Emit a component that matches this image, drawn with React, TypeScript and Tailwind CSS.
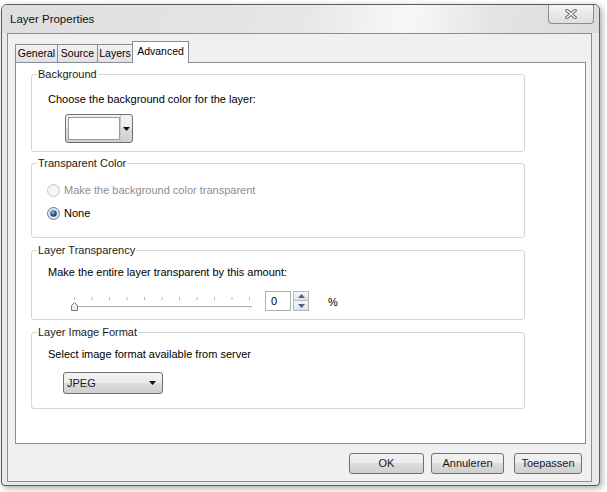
import type { ReactNode } from 'react';

const btn =
    'h-[21px] rounded-[3px] border border-[#707070] bg-[linear-gradient(#f2f2f2_0%,#ebebeb_50%,#dddddd_50%,#cfcfcf_100%)] flex items-center text-[#1a1a1a]';

const tab =
    'h-[18px] border-l border-t border-[#898c95] bg-[linear-gradient(#f3f3f3,#e1e1e1)] flex items-center justify-center text-[10.5px]';

const Group = ({ title, className, children }: { title: string; className: string; children: ReactNode }) => (
    <fieldset className={`ml-[15px] w-[494px] rounded-[3px] border border-[#d5d5d5] ${className}`}>
        <legend className="ml-[5px] px-[1px] leading-[16px] text-[#1a1a1a]">{title}</legend>
        <div className="pl-[16px]">{children}</div>
    </fieldset>
);

const DownArrow = () => (
    <svg width="7" height="4" viewBox="0 0 7 4">
        <path d="M0 0 H7 L3.5 4 Z" fill="#111" />
    </svg>
);

const Radio = ({ checked, disabled }: { checked?: boolean; disabled?: boolean }) => (
    <svg width="13" height="13" viewBox="0 0 13 13">
        <defs>
            <radialGradient id="rg" cx="0.5" cy="0.5" r="0.5">
                <stop offset="0" stopColor="#ffffff" />
                <stop offset="1" stopColor="#dcdcdc" />
            </radialGradient>
            <radialGradient id="dot" cx="0.4" cy="0.35" r="0.6">
                <stop offset="0" stopColor="#7cc3f0" />
                <stop offset="0.5" stopColor="#2b72b0" />
                <stop offset="1" stopColor="#173f6b" />
            </radialGradient>
        </defs>
        <circle cx="6.5" cy="6.5" r="6" fill={disabled ? '#f4f4f4' : 'url(#rg)'} stroke={disabled ? '#c4c4c4' : '#6f7f90'} />
        {checked && <circle cx="6.5" cy="6.5" r="3.3" fill="url(#dot)" />}
    </svg>
);

const Slider = () => {
    const ticks = Array.from({ length: 11 }, (_, i) => 8 + i * 17.5);
    return (
        <svg width="190" height="20" viewBox="0 0 190 20">
            {ticks.map((x) => (
                <line key={x} x1={x + 0.5} y1="6" x2={x + 0.5} y2="9" stroke="#b8b8b8" />
            ))}
            <line x1="6" y1="15.5" x2="186" y2="15.5" stroke="#b4b4b4" />
            <line x1="6" y1="16.5" x2="186" y2="16.5" stroke="#f4f4f4" />
            <path d="M5.5 14.5 L8.5 11.5 L11.5 14.5 V19.5 H5.5 Z" fill="#ececec" stroke="#7a7a7a" />
        </svg>
    );
};

export default function App() {
    return (
        <div className="w-[607px] h-[492px] bg-white pt-[4px] pl-[1px] font-['Liberation_Sans',Arial,sans-serif] text-[11px] text-black">
            <div className="w-[599px] h-[482px] rounded-t-[6px] rounded-b-[4px] border border-[#5c5c5c] bg-[#e9e9e9] shadow-[2px_2px_6px_rgba(0,0,0,0.35)] flex flex-col">
                {/* title bar */}
                <div className="h-[28px] flex items-start rounded-t-[5px] bg-[linear-gradient(100deg,#dedede_0%,#e6e6e6_50%,#f8f8f8_68%,#e4e4e4_82%,#dcdcdc_100%)]">
                    <div className="pl-[8px] pt-[7px] text-[11.5px] leading-[14px] text-[#111]">Layer Properties</div>
                    <div className="ml-auto mr-[5px] w-[46px] h-[19px] rounded-b-[4px] border border-t-0 border-[#8c8c8c] bg-[linear-gradient(#f4f4f4,#dedede)] flex items-center justify-center">
                        <svg width="12" height="10" viewBox="0 0 12 10">
                            <path d="M2 1.5 L10 8.5 M10 1.5 L2 8.5" stroke="#6b6b6b" strokeWidth="3.4" strokeLinecap="square" />
                            <path d="M2 1.5 L10 8.5 M10 1.5 L2 8.5" stroke="#fbfbfb" strokeWidth="1.4" strokeLinecap="square" />
                        </svg>
                    </div>
                </div>

                {/* client area */}
                <div className="ml-[5px] w-[585px] h-[449px] border border-[#8e8e8e] bg-[#f0f0f0] pl-[7px] flex flex-col">
                    {/* tabs */}
                    <div className="h-[28px] flex items-end">
                        <div className={`w-[42px] ${tab}`}>General</div>
                        <div className={`w-[40px] ${tab}`}>Source</div>
                        <div className={`w-[35px] ${tab}`}>Layers</div>
                        <div className="relative z-10 -mb-px w-[57px] h-[22px] border border-b-0 border-[#898c95] bg-white flex items-start justify-center pt-[2px] text-[10.5px]">Advanced</div>
                    </div>

                    {/* panel */}
                    <div className="w-[571px] h-[382px] border border-[#898c95] bg-white">
                        <Group title="Background" className="mt-[3px] h-[86px]">
                            <div className="mt-[9px] leading-[16px]">Choose the background color for the layer:</div>
                            <div className={`mt-[7px] ml-[17px] w-[68px] h-[29px] ${btn}`}>
                                <div className="ml-[2px] w-[52px] h-[23px] border border-[#9a9a9a] bg-white" />
                                <div className="flex-1 h-full flex items-center justify-center border-l border-[#c8c8c8]">
                                    <DownArrow />
                                </div>
                            </div>
                        </Group>

                        <Group title="Transparent Color" className="mt-[3px] h-[83px]">
                            <div className="mt-[11px] h-[16px] flex items-center gap-[4px] -ml-[1px] text-[#8d8d8d]">
                                <Radio disabled />
                                <span>Make the background color transparent</span>
                            </div>
                            <div className="mt-[7px] h-[16px] flex items-center gap-[4px] -ml-[1px]">
                                <Radio checked />
                                <span>None</span>
                            </div>
                        </Group>

                        <Group title="Layer Transparency" className="mt-[4px] h-[78px]">
                            <div className="mt-[6px] leading-[16px]">Make the entire layer transparent by this amount:</div>
                            <div className="mt-[11px] h-[20px] flex items-start">
                                <div className="ml-[18px]">
                                    <Slider />
                                </div>
                                <div className="ml-[9px] w-[26px] h-[20px] border border-[#abadb3] bg-white pl-[5px] leading-[18px]">0</div>
                                <div className="ml-[2px] w-[16px] h-[20px] flex flex-col">
                                    <div className="h-[10px] border border-[#b5b8c0] bg-[linear-gradient(#f4f6f9,#dfe3ea)] flex items-center justify-center">
                                        <svg width="7" height="4" viewBox="0 0 7 4">
                                            <path d="M0 4 H7 L3.5 0 Z" fill="#4d6185" />
                                        </svg>
                                    </div>
                                    <div className="h-[10px] border border-t-0 border-[#b5b8c0] bg-[linear-gradient(#f4f6f9,#dfe3ea)] flex items-center justify-center">
                                        <svg width="7" height="4" viewBox="0 0 7 4">
                                            <path d="M0 0 H7 L3.5 4 Z" fill="#4d6185" />
                                        </svg>
                                    </div>
                                </div>
                                <div className="ml-[19px] leading-[22px]">%</div>
                            </div>
                        </Group>

                        <Group title="Layer Image Format" className="mt-[4px] h-[85px]">
                            <div className="mt-[6px] leading-[16px]">Select image format available from server</div>
                            <div className={`mt-[10px] ml-[15px] w-[100px] h-[22px] ${btn} justify-between pl-[3px] pr-[6px]`}>
                                <span>JPEG</span>
                                <DownArrow />
                            </div>
                        </Group>
                    </div>

                    {/* buttons */}
                    <div className="mt-[9px] flex justify-end pr-[9px]">
                        <div className={`w-[75px] justify-center ${btn}`}>OK</div>
                        <div className={`ml-[7px] w-[73px] justify-center ${btn}`}>Annuleren</div>
                        <div className={`ml-[10px] w-[68px] justify-center ${btn}`}>Toepassen</div>
                    </div>
                </div>
            </div>
        </div>
    );
}
